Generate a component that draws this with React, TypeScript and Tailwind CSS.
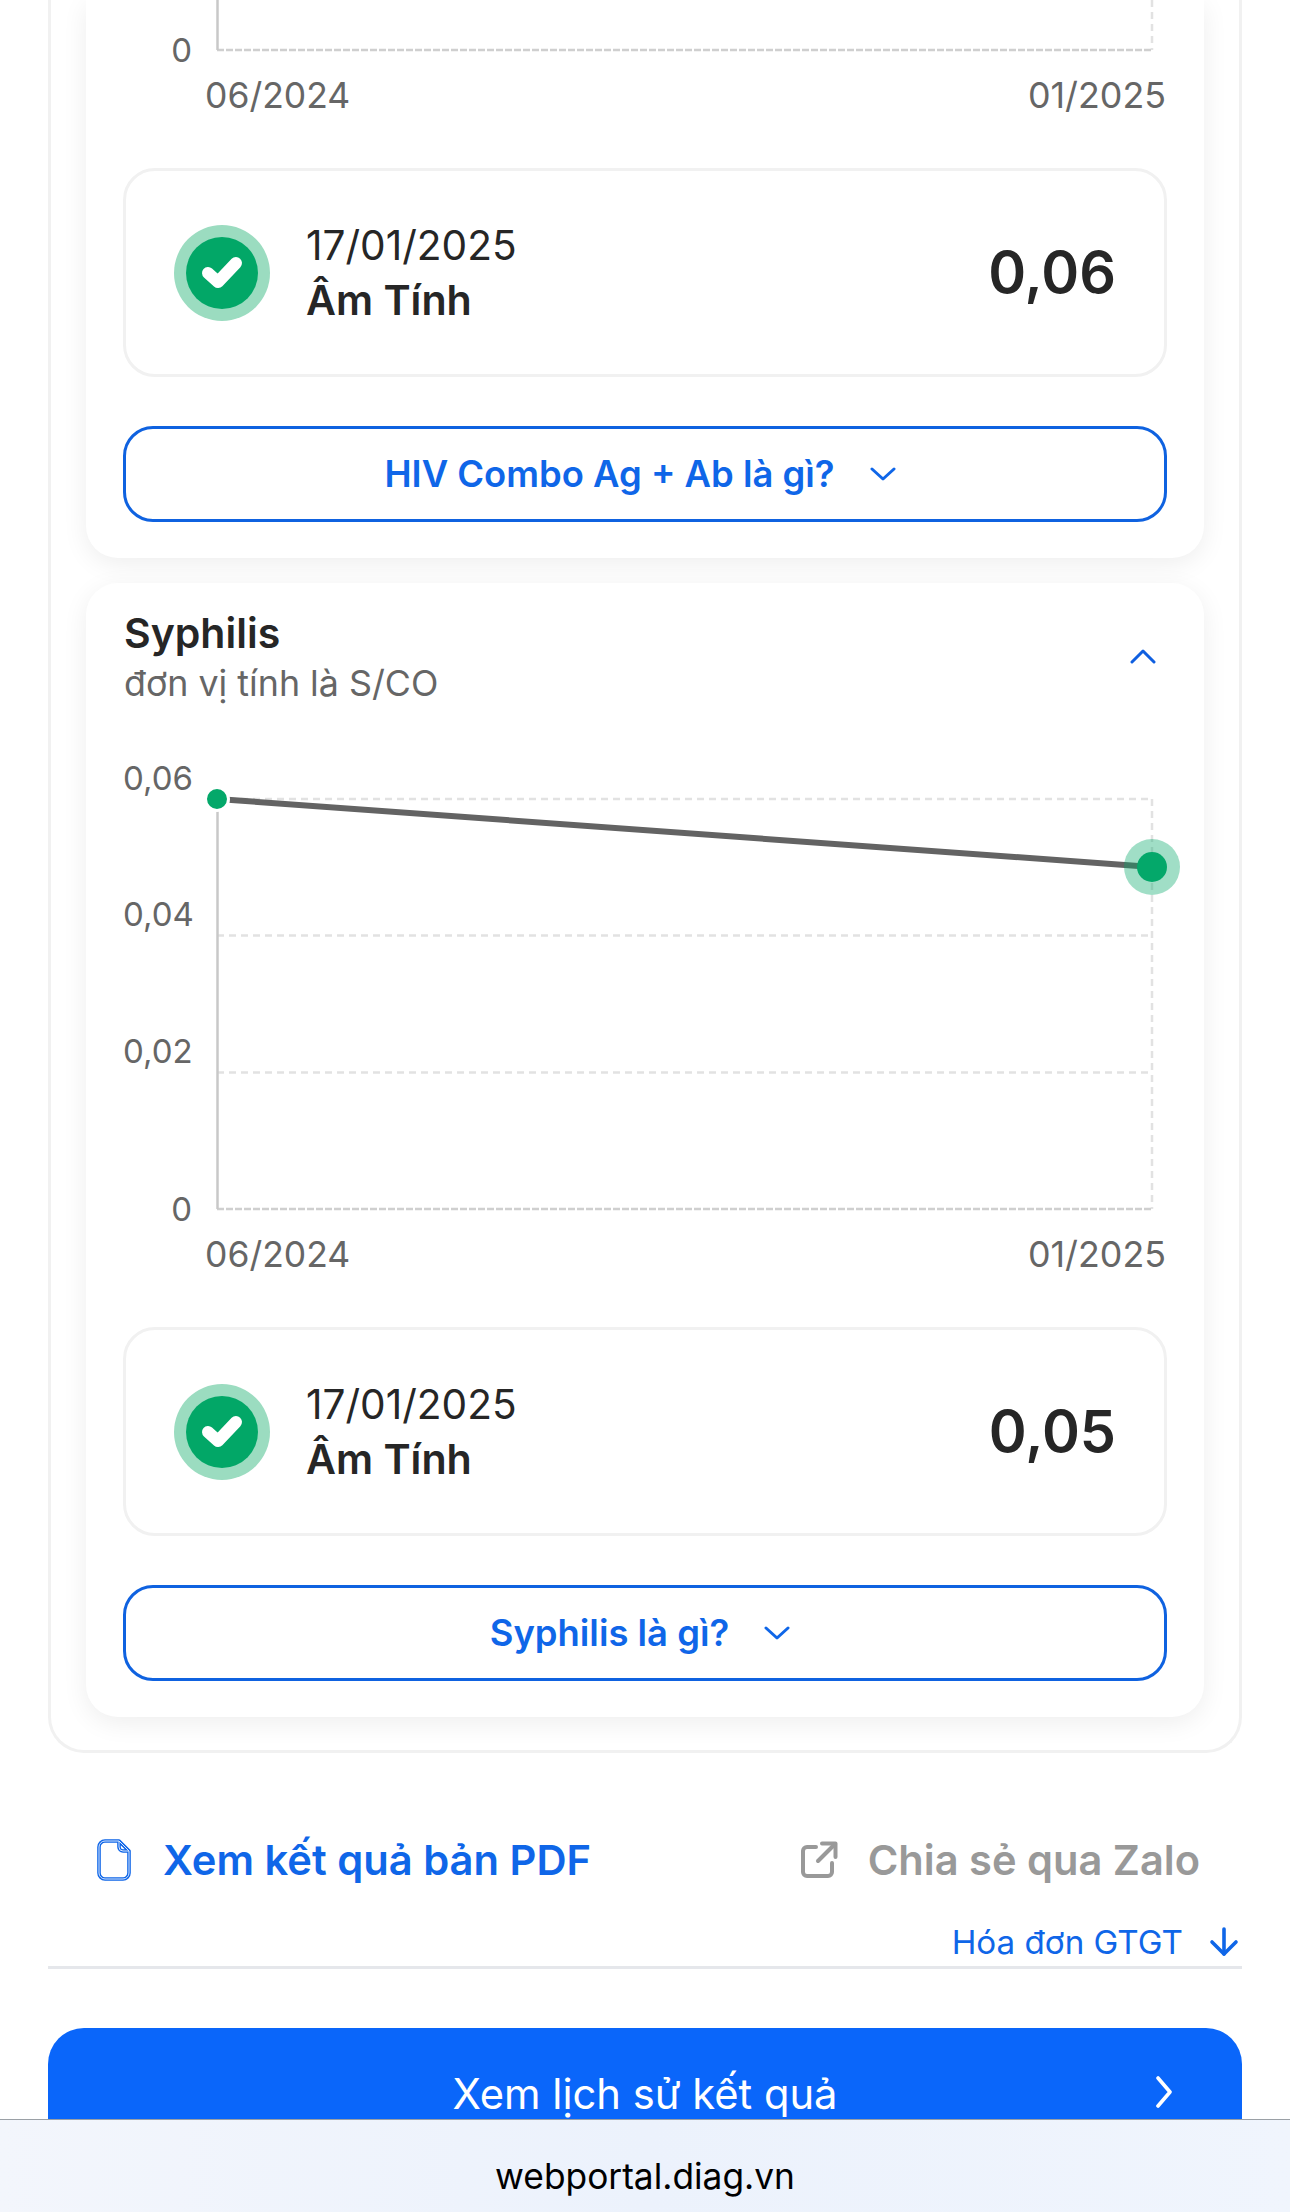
import React from "react";

const F = "Inter, 'Noto Sans', sans-serif";

function Chart({ cropped }: { cropped?: boolean }) {
  // svg origin: x = card content left (124), y = 760 on the page for the Syphilis card
  const ox = 124;
  const oy = 760;
  const X = (x: number) => x - ox;
  const Y = (y: number) => y - oy;
  const labels: [string, number][] = [
    ["0,06", 778],
    ["0,04", 914],
    ["0,02", 1051],
  ];
  const vy = cropped ? 399 : 0;
  const h = 520 - vy;
  return (
    <svg width={1060} height={h} viewBox={`0 ${vy} 1060 ${h}`} className="block overflow-visible" style={{ fontFamily: F }}>
      {[799, 935.5, 1072.5].map((y) => (
        <line key={y} x1={X(217)} x2={X(1152)} y1={Y(y)} y2={Y(y)} stroke="#e2e2e2" strokeWidth={2.5} strokeDasharray="7 5" className={cropped ? "hidden" : ""} />
      ))}
      <line x1={X(1152)} x2={X(1152)} y1={Y(cropped ? 1159 : 799)} y2={Y(1209)} stroke="#e2e2e2" strokeWidth={2.5} strokeDasharray="7 5" />
      <line x1={X(217)} x2={X(1152)} y1={Y(1209)} y2={Y(1209)} stroke="#cfcfcf" strokeWidth={2.5} strokeDasharray="7 2" />
      <line x1={X(217.5)} x2={X(217.5)} y1={Y(cropped ? 1159 : 799)} y2={Y(1209)} stroke="#c8c8c8" strokeWidth={2.5} />
      {!cropped && labels.map(([t, y]) => (
        <text key={t} x={-1} y={Y(y) + 12} fontSize={33} fill="#666666">{t}</text>
      ))}
      <text x={X(192)} y={Y(1209) + 12} fontSize={33} fill="#666666" textAnchor="end">0</text>
      <text x={X(205)} y={Y(1253) + 14} fontSize={35.5} fill="#666666">06/2024</text>
      <text x={X(1166)} y={Y(1253) + 14} fontSize={35.8} fill="#666666" textAnchor="end">01/2025</text>
      {!cropped && (
        <>
          <line x1={X(217)} y1={Y(799)} x2={X(1152)} y2={Y(867)} stroke="#636363" strokeWidth={6} />
          <circle cx={X(217)} cy={Y(799)} r={11.5} fill="#04a86a" stroke="#ffffff" strokeWidth={3} />
          <circle cx={X(1152)} cy={Y(867)} r={28} fill="#04a86a" fillOpacity={0.38} />
          <circle cx={X(1152)} cy={Y(867)} r={15} fill="#04a86a" />
        </>
      )}
    </svg>
  );
}

function CheckBadge() {
  return (
    <svg width={96} height={96} viewBox="0 0 96 96" className="shrink-0">
      <circle cx={48} cy={48} r={48} fill="#9bdcc0" />
      <circle cx={48} cy={48} r={36} fill="#02a767" />
      <path d="M34 48 L44 57 L62 38" fill="none" stroke="#ffffff" strokeWidth={12} strokeLinecap="round" strokeLinejoin="round" />
    </svg>
  );
}

function ChevronDown() {
  return (
    <svg width={26} height={16} viewBox="0 0 26 16" fill="none" className="shrink-0">
      <path d="M2 3 L13 13 L24 3" stroke="#0f66e8" strokeWidth={3} strokeLinecap="round" strokeLinejoin="round" />
    </svg>
  );
}

function ResultCard({ title, value, question, cropped }: { title?: string; value: string; question: string; cropped?: boolean }) {
  return (
    <section className={cropped ? "rounded-b-[32px] bg-white px-[38px] pb-[36px] shadow-[0_6px_26px_rgba(0,0,0,0.07)]" : "rounded-[32px] bg-white px-[38px] pt-[24px] pb-[36px] shadow-[0_6px_26px_rgba(0,0,0,0.07)]"}>
      {title && (
        <div className="mb-[54px] flex items-center justify-between">
          <div>
            <div className="text-[41px] leading-[53px] font-semibold text-[#262626]">{title}</div>
            <div className="text-[35.8px] leading-[46px] text-[#666666]">đơn vị tính là S/CO</div>
          </div>
          <svg width={26} height={15} viewBox="0 0 26 15" fill="none" className="mr-[10px]">
            <path d="M2 13 L13 2 L24 13" stroke="#0f5fe0" strokeWidth={3} strokeLinecap="round" strokeLinejoin="round" />
          </svg>
        </div>
      )}
      <Chart cropped={cropped} />
      <div className="-mx-px mt-[47px] flex h-[209px] items-center rounded-[32px] border-[3px] border-[#f1f1f1] pl-[48px] pr-[48px]">
        <CheckBadge />
        <div className="ml-[36px] flex-1">
          <div className="text-[40.6px] leading-[54px] text-[#262626]">17/01/2025</div>
          <div className="text-[41.2px] leading-[54px] font-semibold text-[#262626]">Âm Tính</div>
        </div>
        <div className="text-[57.5px] leading-none font-semibold text-[#262626]">{value}</div>
      </div>
      <button className="-mx-px mt-[49px] flex h-[96px] w-[calc(100%+2px)] items-center justify-center gap-[35px] rounded-[30px] border-[3px] border-[#0f62e0] bg-white pr-[10px]">
        <span className="text-[36.4px] font-semibold text-[#0f66e8]">{question}</span>
        <ChevronDown />
      </button>
    </section>
  );
}

export default function App() {
  return (
    <div className="relative h-[2212px] w-[1290px] overflow-hidden bg-white" style={{ fontFamily: F }}>
      <div className="mx-[48px] rounded-b-[36px] border-x-[3px] border-b-[3px] border-[#f1f1f1] bg-white px-[35px] pb-[33px]">
        <div className="flex flex-col gap-[25px]">
          <ResultCard cropped value="0,06" question="HIV Combo Ag + Ab là gì?" />
          <ResultCard title="Syphilis" value="0,05" question="Syphilis là gì?" />
        </div>
      </div>

      <div className="mx-[48px] mt-[81px] flex items-center justify-between pl-[49px] pr-[42px]">
        <div className="flex items-center gap-[32px]">
          <svg width={34} height={42} viewBox="0 0 34 42" fill="none">
            <path d="M8 2 H22 L32 12 V34 a6 6 0 0 1 -6 6 H8 a6 6 0 0 1 -6 -6 V8 a6 6 0 0 1 6 -6 Z M22 2 V8 a4 4 0 0 0 4 4 H32" stroke="#0f66e8" strokeWidth={3.6} strokeLinejoin="round" />
            <path d="M8 2 H22 L32 12 V34 a6 6 0 0 1 -6 6 H8 a6 6 0 0 1 -6 -6 V8 a6 6 0 0 1 6 -6 Z M22 2 V8 a4 4 0 0 0 4 4 H32" stroke="#dbe8fd" strokeWidth={1} strokeLinejoin="round" />
          </svg>
          <span className="text-[41.7px] leading-[52px] font-semibold text-[#0f66e8]">Xem kết quả bản PDF</span>
        </div>
        <div className="flex items-center gap-[30px]">
          <svg width={38} height={38} viewBox="0 0 38 38" fill="none" stroke="#999999" strokeWidth={4} strokeLinecap="round" strokeLinejoin="round">
            <path d="M16 6 H7 a4 4 0 0 0 -4 4 V31 a4 4 0 0 0 4 4 H28 a4 4 0 0 0 4 -4 V22" />
            <path d="M22 2.5 H35.5 V16" />
            <path d="M35 3 L18 20" />
          </svg>
          <span className="text-[41.6px] leading-[52px] font-semibold text-[#999999]">Chia sẻ qua Zalo</span>
        </div>
      </div>

      <div className="mx-[48px] mt-[35px] flex items-center justify-end gap-[26px] border-b-[3px] border-[#e5e7eb] pb-[3px] pr-[3px]">
        <span className="text-[33.2px] leading-[42px] text-[#0f66e8]">Hóa đơn GTGT</span>
        <svg width={30} height={30} viewBox="0 0 30 30" fill="none" stroke="#0f66e8" strokeWidth={3.6} strokeLinecap="round" strokeLinejoin="round">
          <path d="M15 2 V27" />
          <path d="M3 15 L15 27 L27 15" />
        </svg>
      </div>

      <button className="relative mx-[48px] mt-[59px] flex h-[140px] w-[1194px] items-start justify-center rounded-[36px] bg-[#0a66fa] pt-[40px]">
        <span className="text-[41.7px] leading-[52px] text-white">Xem lịch sử kết quả</span>
        <svg width={18} height={32} viewBox="0 0 18 32" fill="none" stroke="#ffffff" strokeWidth={3.6} strokeLinecap="round" strokeLinejoin="round" className="absolute right-[69px] top-[48px]">
          <path d="M3 2 L15 16 L3 30" />
        </svg>
      </button>

      <footer className="absolute inset-x-0 bottom-0 flex h-[93px] items-center justify-center border-t border-[#9aa0a6] bg-gradient-to-r from-[#f3f6fc] via-[#ecf2fc] to-[#f0f5fd] pt-[22px]">
        <span className="text-[35.3px] text-black">webportal.diag.vn</span>
      </footer>
    </div>
  );
}
